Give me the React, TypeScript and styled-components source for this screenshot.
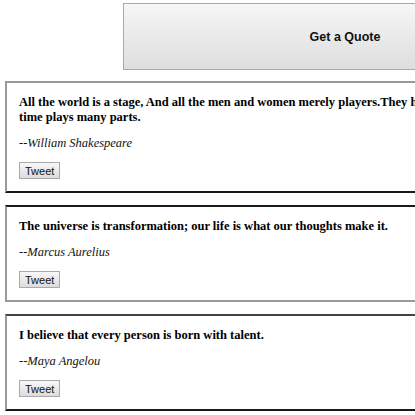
import React from "react";
import styled, { createGlobalStyle } from "styled-components";

const Global = createGlobalStyle`
  html, body { margin: 0; padding: 0; background: #ffffff; }
  body { font-family: "Liberation Serif", "Times New Roman", serif; color: #000; }
`;

const Page = styled.div`
  padding: 3px 0 0 5px;
  width: 720px;
`;

const Header = styled.div`
  display: flex;
  padding-left: 118px;
  margin-bottom: 11px;
`;

const QuoteButton = styled.button`
  width: 444px;
  height: 67px;
  border: 1px solid #a9a9a9;
  background: linear-gradient(#f6f6f6, #dedede);
  font-family: "Liberation Sans", Arial, sans-serif;
  font-weight: bold;
  font-size: 12.5px;
  color: #111;
  padding: 0;
`;

const List = styled.div`
  display: flex;
  flex-direction: column;
  gap: 12px;
`;

const Card = styled.div<{ $top: string; $bottom: string }>`
  border-left: 2px solid #9a9a9a;
  border-right: 2px solid #333;
  border-top: 2px solid ${(p) => p.$top};
  border-bottom: 2px solid ${(p) => p.$bottom};
  padding: 12px 12px 12px 12px;
`;

const Quote = styled.p`
  margin: 0 0 11px;
  font-weight: bold;
  font-size: 12.5px;
  line-height: 15px;
`;

const Author = styled.p`
  margin: 0 0 11px;
  font-size: 12.5px;
  line-height: 15px;
  color: #111;
  em { font-style: italic; }
`;

const Tweet = styled.button`
  height: 17px;
  padding: 0 5px;
  border: 1px solid #a9a9a9;
  background: linear-gradient(#f8f8f8, #dcdcdc);
  font-family: "Liberation Sans", Arial, sans-serif;
  font-size: 11px;
  line-height: 14px;
  color: #111;
  display: block;
`;

const quotes = [
  {
    text: "All the world is a stage, And all the men and women merely players.They have their exits and their entrances; And one man in his time plays many parts.",
    author: "William Shakespeare",
    top: "#9a9a9a",
    bottom: "#1a1a1a",
  },
  {
    text: "The universe is transformation; our life is what our thoughts make it.",
    author: "Marcus Aurelius",
    top: "#1a1a1a",
    bottom: "#9a9a9a",
  },
  {
    text: "I believe that every person is born with talent.",
    author: "Maya Angelou",
    top: "#444444",
    bottom: "#1a1a1a",
  },
];

export default function App() {
  return (
    <Page>
      <Global />
      <Header>
        <QuoteButton>Get a Quote</QuoteButton>
      </Header>
      <List>
        {quotes.map((q) => (
          <Card key={q.author} $top={q.top} $bottom={q.bottom}>
            <Quote>{q.text}</Quote>
            <Author>
              --<em>{q.author}</em>
            </Author>
            <Tweet>Tweet</Tweet>
          </Card>
        ))}
      </List>
    </Page>
  );
}
